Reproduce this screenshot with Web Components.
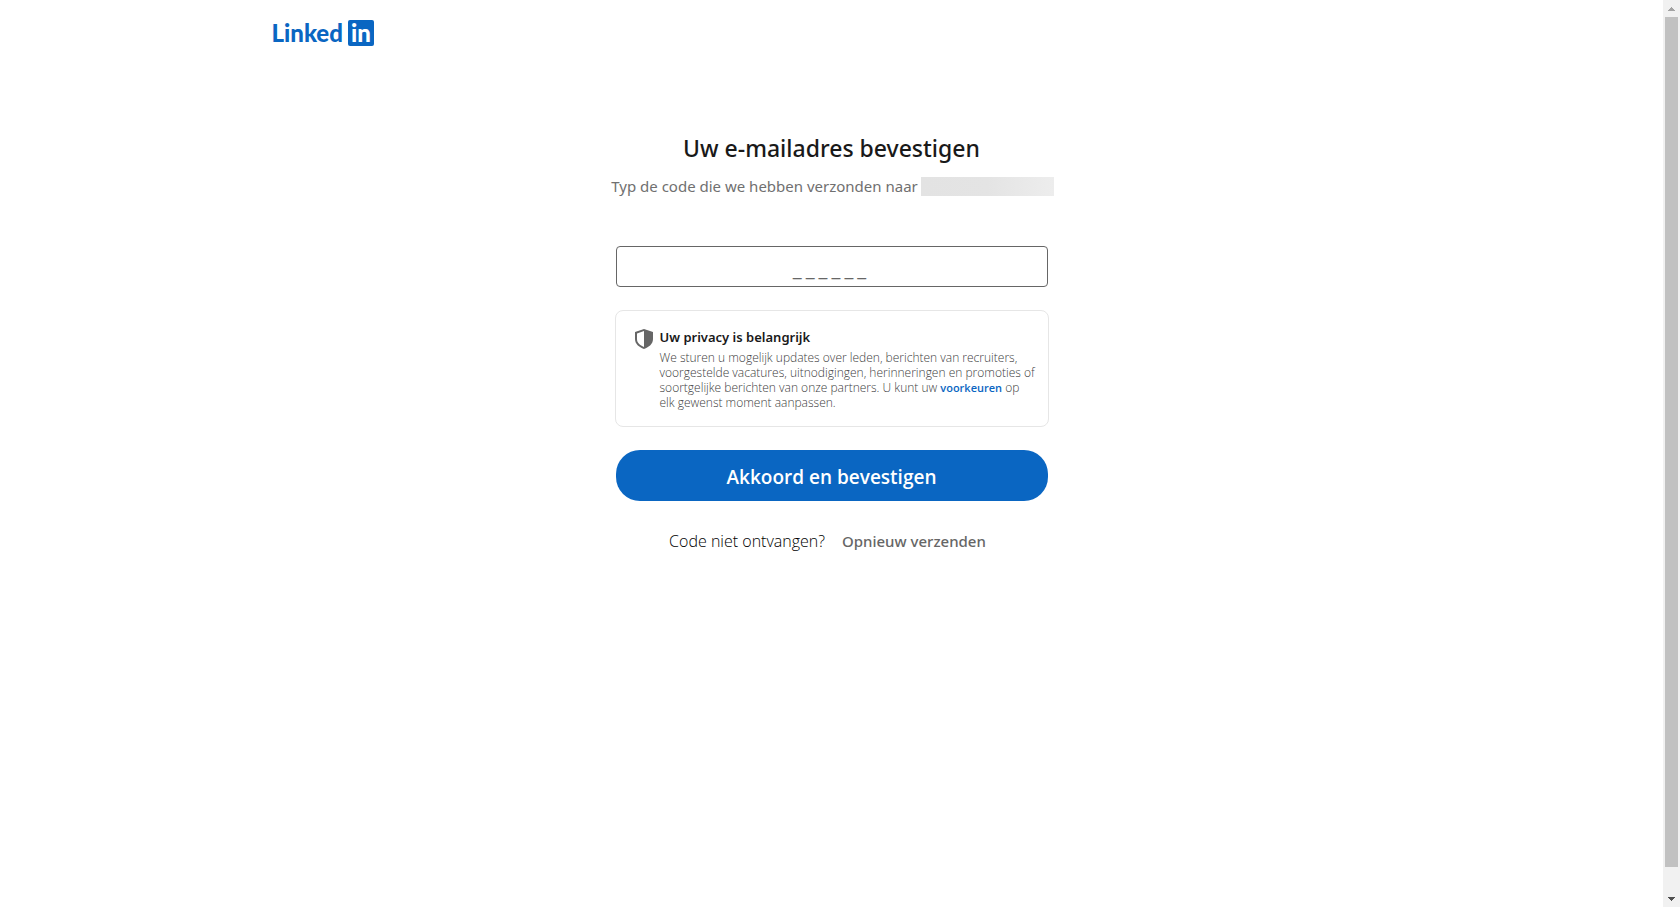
<!DOCTYPE html>
<html lang="nl">
<head>
<meta charset="utf-8">
<meta name="viewport" content="width=device-width, initial-scale=1">
<title>Uw e-mailadres bevestigen | LinkedIn</title>
<style>
  body { margin: 0; background: #fff; font-family: "Noto Sans", "Open Sans", sans-serif; color: #191919; }
</style>
</head>
<body>
<verify-page>
  <site-logo slot="header"></site-logo>
  <code-form></code-form>
  <scroll-rail slot="rail"></scroll-rail>
</verify-page>

<script>
const define = (name, html, setup) => {
  const template = document.createElement('template');
  template.innerHTML = html;
  customElements.define(name, class extends HTMLElement {
    constructor() {
      super();
      this.attachShadow({ mode: 'open' }).append(template.content.cloneNode(true));
      if (setup) setup(this.shadowRoot);
    }
  });
};

define('verify-page', `
  <style>
    :host { display: grid; grid-template-columns: minmax(0, 1fr) 17px; min-height: 100vh; }
    header { max-width: 1120px; margin: 0 auto; padding-top: 20px; }
    main { display: flex; justify-content: center; padding: 86px 16px 32px; }
  </style>
  <div>
    <header><slot name="header"></slot></header>
    <main><slot></slot></main>
  </div>
  <slot name="rail"></slot>
`);

define('site-logo', `
  <style>
    :host { display: block; color: #0a66c2; font: 900 24px/26px Lato, "Open Sans", sans-serif; }
    a { display: inline-flex; gap: 5px; color: inherit; text-decoration: none; vertical-align: top; }
    .badge { width: 26px; height: 26px; border-radius: 2px; background: #0a66c2; color: #fff; text-align: center; }
  </style>
  <a href="#" aria-label="LinkedIn"><span>Linked</span><span class="badge">in</span></a>
`);

define('privacy-card', `
  <style>
    :host { display: flex; gap: 7px; padding: 16px 12px 16px 19px; border: 1px solid #e6e6e6; border-radius: 8px; }
    svg { flex: none; margin-top: 2px; width: 18px; height: 20px; }
    h2 { margin: 0 0 3px; font-size: 13px; line-height: 20px; font-weight: 600; }
    p { margin: 0; font: 300 12px/15px "Open Sans", sans-serif; color: #404040; white-space: nowrap; }
    @media (max-width: 480px) { p { white-space: normal; } }
  </style>
  <svg viewBox="0 0 18 20" aria-hidden="true">
    <path fill="#666" fill-rule="evenodd" d="M9 0l9 3v7c0 5-4 8-9 10-5-2-9-5-9-10V3zM9 2L2 4.400V10c0 4 3 6.200 7 7.900z"/>
  </svg>
  <div><h2><slot name="title"></slot></h2><p><slot></slot></p></div>
`);

define('submit-button', `
  <style>
    :host { display: block; }
    button { display: block; width: 100%; height: 51px; border: 0; border-radius: 24px; padding: 2px 0 0; background: #0a66c2;
      color: #fff; font: 600 19px/26px "Open Sans", sans-serif; cursor: pointer; }
  </style>
  <button type="submit"><slot></slot></button>
`);

define('code-form', `
  <style>
    :host { display: block; width: 100%; max-width: 434px; }
    h1 { margin: 0 0 12px; font-size: 23px; line-height: 32px; font-weight: 500; text-align: center; }
    .sent { display: flex; justify-content: center; align-items: flex-end; gap: 3px; margin: 0 -8px 49px;
      padding: 0 0 1px 2px; font-size: 15px; line-height: 20px; color: #707070; white-space: nowrap; }
    .address { width: 133px; height: 19px; background: linear-gradient(90deg, #e3e3e3, #e4e4e4 50%, #ededed); }
    .sent { padding-bottom: 0; margin-bottom: 50px; }
    .field, submit-button { margin: 0 1px; }
    input { display: block; box-sizing: border-box; width: 100%; height: 41px; padding: 3px 12px 0; border: 1px solid #666;
      border-radius: 4px; background: #fff; color: #191919; text-align: center; font: 20px/28px "Noto Sans", sans-serif; letter-spacing: 4px; }
    input::placeholder { color: #666; opacity: 1; }
    privacy-card { margin: 23px 0; }
    .link { color: #0a66c2; font-weight: 600; font-size: 11px; text-decoration: none; }
    .again { display: flex; justify-content: center; gap: 17px; margin: 30px 0 0; padding-right: 8px; line-height: 20px; }
    .again span { font: 300 16px/20px "Open Sans", sans-serif; color: #000; }
    .again button { padding: 0; border: 0; background: none; color: #666; font: 500 15px/20px "Noto Sans", sans-serif; cursor: pointer; }
  </style>
  <form>
    <h1>Uw e-mailadres bevestigen</h1>
    <p class="sent"><span>Typ de code die we hebben verzonden naar</span><span class="address"></span></p>
    <div class="field"><input type="text" inputmode="numeric" maxlength="6" placeholder="______" aria-label="Code"></div>
    <privacy-card>
      <span slot="title">Uw privacy is belangrijk</span>
      We sturen u mogelijk updates over leden, berichten van recruiters,<br>
      voorgestelde vacatures, uitnodigingen, herinneringen en promoties of<br>
      soortgelijke berichten van onze partners. U kunt uw <a class="link" href="#">voorkeuren</a> op<br>
      elk gewenst moment aanpassen.
    </privacy-card>
    <submit-button>Akkoord en bevestigen</submit-button>
    <p class="again"><span>Code niet ontvangen?</span><button type="button">Opnieuw verzenden</button></p>
  </form>
`, root => root.querySelector('submit-button').addEventListener('click', () => root.querySelector('form').requestSubmit()));

define('scroll-rail', `
  <style>
    :host { display: flex; flex-direction: column; position: sticky; top: 0; height: 100vh; background: #f1f1f1; }
    svg { flex: none; width: 17px; height: 17px; }
    .track { flex: 1; display: flex; flex-direction: column; padding: 0 2px; }
    .thumb { flex: 850; background: #c1c1c1; }
    .rest { flex: 23; }
  </style>
  <svg viewBox="0 0 17 17" aria-hidden="true"><path fill="#a3a3a3" d="M5 11h7v-1h-1V9h-1V8H9V7H8v1H7v1H6v1H5z"/></svg>
  <div class="track"><div class="thumb"></div><div class="rest"></div></div>
  <svg viewBox="0 0 17 17" aria-hidden="true"><path fill="#505050" d="M5 7h7v1h-1v1h-1v1H9v1H8v-1H7V9H6V8H5z"/></svg>
`);
</script>
</body>
</html>
